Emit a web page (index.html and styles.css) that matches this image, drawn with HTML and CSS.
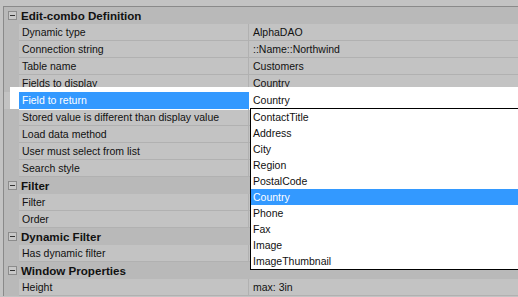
FILE: index.html
```html
<!DOCTYPE html>
<html lang="en">
<head>
    <meta charset="UTF-8">
    <title>Edit-combo Definition</title>
    <link rel="stylesheet" href="styles.css">
</head>
<body>

    <div class="grid">
        <div class="cat"><span class="toggle"></span>Edit-combo Definition</div>
        <div class="row"><div class="gutter"></div><div class="name">Dynamic type</div><div class="val">AlphaDAO</div></div>
        <div class="row"><div class="gutter"></div><div class="name">Connection string</div><div class="val">::Name::Northwind</div></div>
        <div class="row"><div class="gutter"></div><div class="name">Table name</div><div class="val">Customers</div></div>
        <div class="row"><div class="gutter"></div><div class="name">Fields to display</div><div class="val">Country</div></div>
        <div class="row selected"><div class="gutter"></div><div class="name">Field to return</div><div class="val">Country</div></div>
        <div class="row"><div class="gutter"></div><div class="name">Stored value is different than display value</div><div class="val"></div></div>
        <div class="row"><div class="gutter"></div><div class="name">Load data method</div><div class="val"></div></div>
        <div class="row"><div class="gutter"></div><div class="name">User must select from list</div><div class="val"></div></div>
        <div class="row"><div class="gutter"></div><div class="name">Search style</div><div class="val"></div></div>
        <div class="cat"><span class="toggle"></span>Filter</div>
        <div class="row"><div class="gutter"></div><div class="name">Filter</div><div class="val"></div></div>
        <div class="row"><div class="gutter"></div><div class="name">Order</div><div class="val"></div></div>
        <div class="cat"><span class="toggle"></span>Dynamic Filter</div>
        <div class="row"><div class="gutter"></div><div class="name">Has dynamic filter</div><div class="val"></div></div>
        <div class="cat"><span class="toggle"></span>Window Properties</div>
        <div class="row"><div class="gutter"></div><div class="name">Height</div><div class="val">max: 3in</div></div>
    </div>

    <ul class="dropdown">
        <li>ContactTitle</li>
        <li>Address</li>
        <li>City</li>
        <li>Region</li>
        <li>PostalCode</li>
        <li class="current">Country</li>
        <li>Phone</li>
        <li>Fax</li>
        <li>Image</li>
        <li>ImageThumbnail</li>
    </ul>

</body>
</html>
```

FILE: styles.css
```css
body{
    margin: 0;
    background: #c3c3c3;
    font-family: "Liberation Sans", Arial, sans-serif;
    font-size: 10.5px;
    color: #111;
    overflow: hidden;
    height: 297px;
}
.grid
{
    margin: 6px 0 0 3px;
    border-top: 1px solid #8a8a8a;
    border-left: 1px solid #8a8a8a;
    display: flex;
    flex-direction: column;
}
.cat
{
    height: 17px;
    background: #b9b9b9;
    display: flex;
    align-items: center;
    font-weight: bold;
    font-size: 11.6px;
}
.toggle
{
    width: 7px;
    height: 7px;
    border: 1px solid #8c8c8c;
    margin: 0 4px 0 4px;
    position: relative;
    background: #c8c8c8;
}
.toggle::after
{
    content: "";
    position: absolute;
    left: 1px;
    right: 1px;
    top: 3px;
    height: 1px;
    background: #333;
}
.row
{
    height: 17px;
    display: flex;
    position: relative;
}
.gutter
{
    width: 15px;
    background: #b9b9b9;
}
.name,
.val
{
    height: 16px;
    line-height: 16px;
    border-bottom: 1px solid #b1b1b1;
    white-space: nowrap;
}
.name
{
    width: 226px;
    padding-left: 3px;
    border-right: 1px solid #b1b1b1;
}
.val
{
    flex: 1;
    padding-left: 4px;
}
.selected::before
{
    content: "";
    position: absolute;
    left: 6px;
    top: -5px;
    right: 0;
    bottom: -1px;
    background: #fff;
}
.selected .gutter
{
    background: transparent;
}
.selected .name
{
    position: relative;
    background: #3399ff;
    color: #fff;
    border-color: #3399ff;
}
.selected .val
{
    position: relative;
    background: #fff;
    border-color: #fff;
}
.dropdown
{
    position: absolute;
    left: 250px;
    top: 108px;
    width: 290px;
    margin: 0;
    padding: 0;
    list-style: none;
    background: #fff;
    border: 1px solid #000;
}
.dropdown li
{
    height: 16px;
    line-height: 16px;
    padding-left: 2px;
}
.dropdown .current
{
    background: #3399ff;
    color: #fff;
}
```
